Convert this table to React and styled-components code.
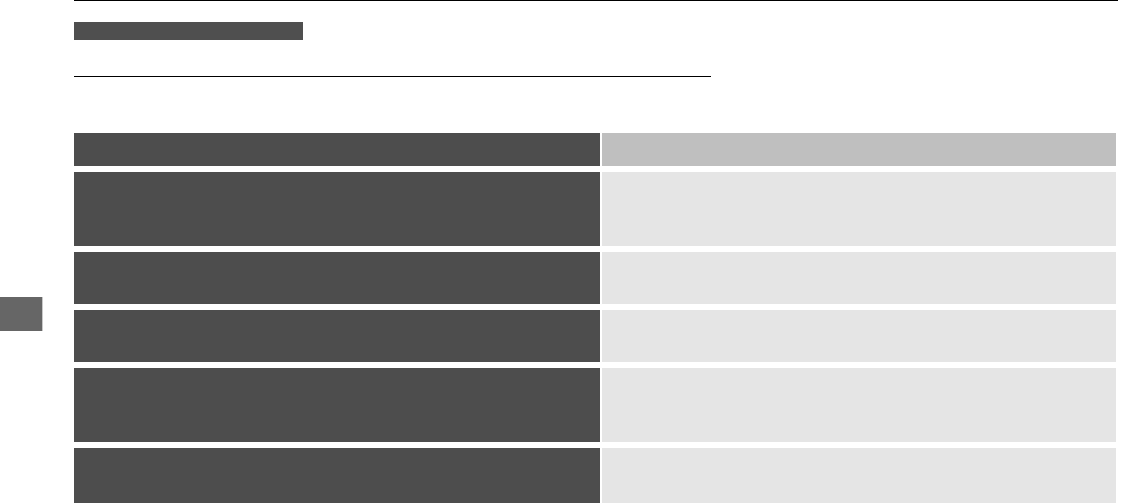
import React from "react";
import styled, { createGlobalStyle } from "styled-components";

const GlobalStyle = createGlobalStyle`
  html, body {
    margin: 0;
    padding: 0;
    background: #ffffff;
    font-family: "Liberation Sans", Arial, sans-serif;
  }
  body {
    overflow: hidden;
  }
`;

const Page = styled.div`
  display: flex;
  width: 1122px;
  height: 503px;
  overflow: hidden;
`;

const SideRail = styled.div`
  width: 74px;
  flex: none;
`;

const ChapterTab = styled.div`
  margin-top: 297px;
  width: 42px;
  height: 34px;
  background: #666666;
  border-right: 1px solid #c8c8c8;
`;

const Content = styled.div`
  width: 1044px;
  flex: none;
  border-top: 1px solid #000000;
`;

const HeadingBar = styled.div`
  margin-top: 21px;
  width: 229px;
  height: 18px;
  background: #4f4f4f;
`;

const Rule = styled.div`
  margin-top: 36px;
  width: 637px;
  border-top: 1px solid #000000;
`;

const Table = styled.div`
  margin-top: 56px;
  display: grid;
  grid-template-columns: 526px 514px;
  column-gap: 2px;
  row-gap: 6px;
`;

const Cell = styled.div`
  height: ${(p) => p.$h}px;
  background: ${(p) =>
    p.$side === "left" ? "#4d4d4d" : p.$head ? "#bfbfbf" : "#e5e5e5"};
`;

const rows = [
  { h: 33, head: true },
  { h: 74 },
  { h: 52 },
  { h: 52 },
  { h: 74 },
  { h: 60 },
];

export default function App() {
  return (
    <>
      <GlobalStyle />
      <Page>
        <SideRail>
          <ChapterTab />
        </SideRail>
        <Content>
          <HeadingBar />
          <Rule />
          <Table>
            {rows.map((r, i) => (
              <React.Fragment key={i}>
                <Cell $side="left" $h={r.h} $head={r.head} />
                <Cell $side="right" $h={r.h} $head={r.head} />
              </React.Fragment>
            ))}
          </Table>
        </Content>
      </Page>
    </>
  );
}
